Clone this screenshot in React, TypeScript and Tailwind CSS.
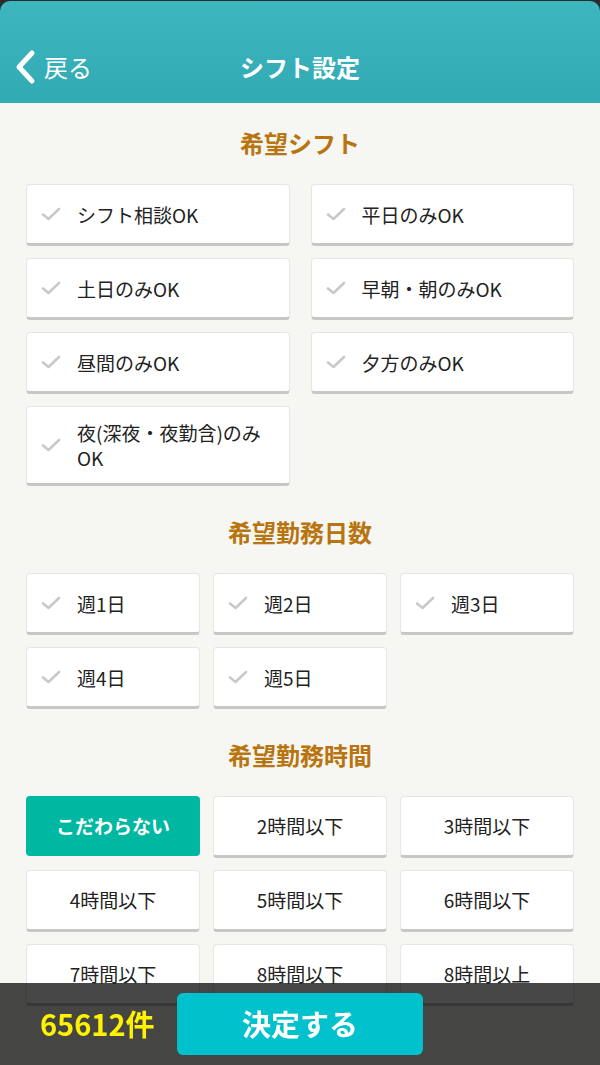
const font = { fontFamily: '"Noto Sans CJK JP", "Noto Sans", sans-serif' };

const shifts = [
  "シフト相談OK",
  "平日のみOK",
  "土日のみOK",
  "早朝・朝のみOK",
  "昼間のみOK",
  "夕方のみOK",
  "夜(深夜・夜勤含)のみOK",
];

const days = ["週1日", "週2日", "週3日", "週4日", "週5日"];

const hours = [
  "こだわらない",
  "2時間以下",
  "3時間以下",
  "4時間以下",
  "5時間以下",
  "6時間以下",
  "7時間以下",
  "8時間以下",
  "8時間以上",
];

function Check() {
  return (
    <svg width="20" height="14" viewBox="0 0 20 14" className="shrink-0">
      <path
        d="M2 7.5 L7.5 12 L18 2"
        fill="none"
        stroke="#c9c9c9"
        strokeWidth="2.6"
        strokeLinecap="round"
        strokeLinejoin="round"
      />
    </svg>
  );
}

function CheckButton({ label }: { label: string }) {
  return (
    <button className="flex min-h-[62px] items-center gap-[16px] rounded-[4px] border border-[#e6e6e6] border-b-[3px] border-b-[#c7c7c5] bg-white pl-[14px] pr-3 py-[13px] text-left text-[19px] leading-[25px] text-[#222]">
      <Check />
      <span>{label}</span>
    </button>
  );
}

function TimeButton({ label, active }: { label: string; active?: boolean }) {
  if (active) {
    return (
      <button className="flex h-[60px] items-center justify-center rounded-[4px] bg-[#00b8a2] text-[19px] font-bold text-white">
        {label}
      </button>
    );
  }
  return (
    <button className="flex h-[62px] items-center justify-center rounded-[4px] border border-[#e6e6e6] border-b-[3px] border-b-[#c7c7c5] bg-white text-[19px] text-[#222]">
      {label}
    </button>
  );
}

function SectionTitle({ children, first }: { children: string; first?: boolean }) {
  return (
    <h2
      className={`${first ? "mt-[20px]" : "mt-[26px]"} mb-[21px] text-center text-[24px] font-bold leading-[40px] text-[#b8740f]`}
    >
      {children}
    </h2>
  );
}

export default function App() {
  return (
    <div className="h-[1065px] overflow-hidden bg-[#f6f6f2]" style={font}>
      <div className="bg-[#2b2b2b] pt-[1px]">
        <header className="relative flex h-[102px] items-end rounded-t-[10px] bg-gradient-to-b from-[#3db6bf] to-[#32aab3] pb-[18px]">
          <button className="flex items-center gap-[6px] pl-[14px] text-[24px] text-white">
            <svg width="24" height="36" viewBox="0 0 24 36">
              <path
                d="M18 4 L5 18 L18 32"
                fill="none"
                stroke="#fff"
                strokeWidth="5"
                strokeLinecap="round"
                strokeLinejoin="round"
              />
            </svg>
            <span className="leading-[36px]">戻る</span>
          </button>
          <h1 className="pointer-events-none absolute inset-x-0 bottom-[18px] text-center text-[24px] font-bold leading-[36px] text-white">
            シフト設定
          </h1>
        </header>
      </div>

      <main className="px-[26px]">
        <SectionTitle first>希望シフト</SectionTitle>
        <div className="grid grid-cols-2 gap-x-[21px] gap-y-[12px]">
          {shifts.map((s) => (
            <CheckButton key={s} label={s} />
          ))}
        </div>

        <SectionTitle>希望勤務日数</SectionTitle>
        <div className="grid grid-cols-3 gap-x-[13px] gap-y-[12px]">
          {days.map((d) => (
            <CheckButton key={d} label={d} />
          ))}
        </div>

        <SectionTitle>希望勤務時間</SectionTitle>
        <div className="grid grid-cols-3 gap-x-[13px] gap-y-[12px]">
          {hours.map((h, i) => (
            <TimeButton key={h} label={h} active={i === 0} />
          ))}
        </div>
      </main>

      <div className="fixed inset-x-0 bottom-0 flex h-[82px] items-center bg-black/[0.72]">
        <span className="w-[177px] pl-[40px] text-[29px] font-bold text-[#fff200]">65612件</span>
        <button className="h-[62px] w-[246px] rounded-[6px] bg-[#00c1cc] text-[29px] font-bold text-white">
          決定する
        </button>
      </div>
    </div>
  );
}
